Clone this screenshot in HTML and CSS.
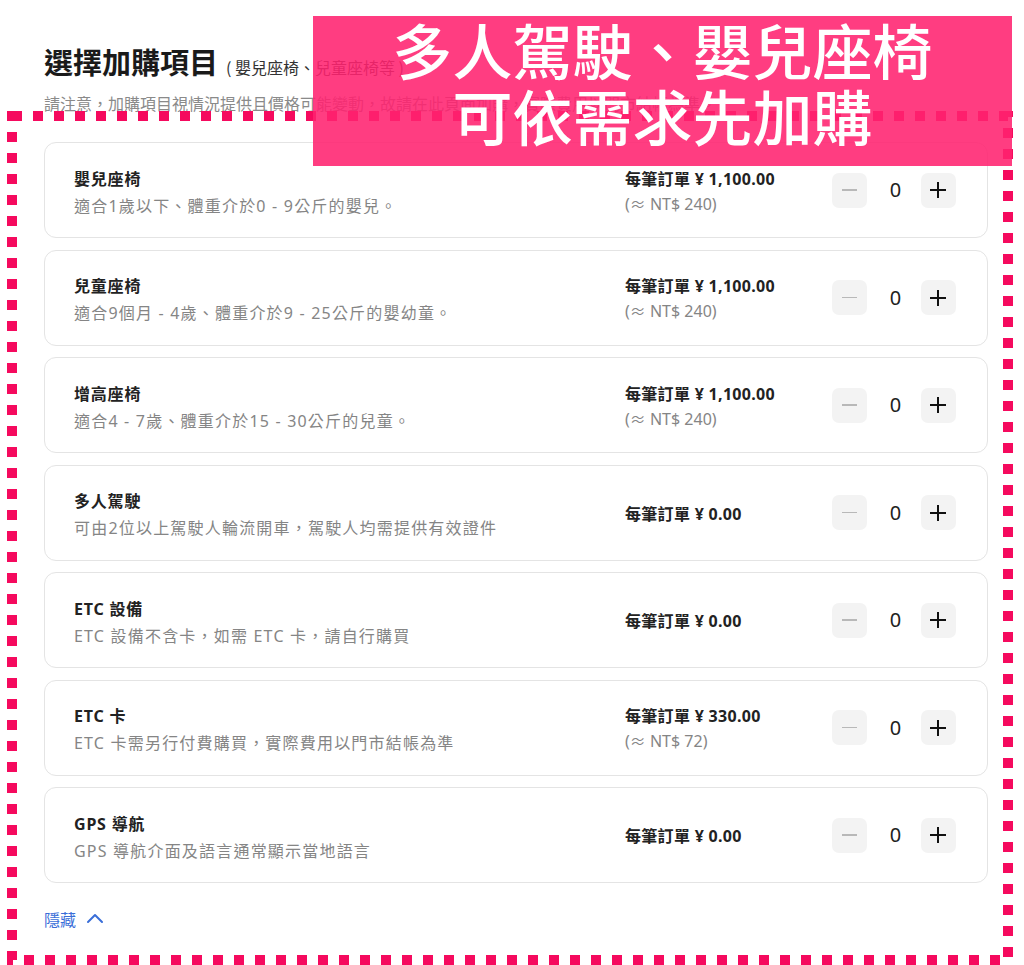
FILE: index.html
```html
<!DOCTYPE html>
<html lang="zh-Hant">
<head>
<meta charset="utf-8">
<title>選擇加購項目</title>
<link rel="stylesheet" href="styles.css">
</head>
<body>
<main class="page">
  <h1 class="title">選擇加購項目<span class="title-sub">( 嬰兒座椅、兒童座椅等 )</span></h1>
  <p class="note">請注意，加購項目視情況提供且價格可能變動，故請在此頁面加購，實際費用以門市結帳為準。</p>

  <ul class="list">
    <li class="card">
      <div class="info"><div class="name">嬰兒座椅</div><div class="desc">適合1歲以下、體重介於0 - 9公斤的嬰兒。</div></div>
      <div class="price"><div class="amount">每筆訂單 ¥ 1,100.00</div><div class="approx">(≈ NT$ 240)</div></div>
      <div class="stepper"><button class="btn minus" aria-label="減少"><span></span></button><span class="qty">0</span><button class="btn plus" aria-label="增加"><span></span></button></div>
    </li>
    <li class="card">
      <div class="info"><div class="name">兒童座椅</div><div class="desc">適合9個月 - 4歲、體重介於9 - 25公斤的嬰幼童。</div></div>
      <div class="price"><div class="amount">每筆訂單 ¥ 1,100.00</div><div class="approx">(≈ NT$ 240)</div></div>
      <div class="stepper"><button class="btn minus" aria-label="減少"><span></span></button><span class="qty">0</span><button class="btn plus" aria-label="增加"><span></span></button></div>
    </li>
    <li class="card">
      <div class="info"><div class="name">增高座椅</div><div class="desc">適合4 - 7歲、體重介於15 - 30公斤的兒童。</div></div>
      <div class="price"><div class="amount">每筆訂單 ¥ 1,100.00</div><div class="approx">(≈ NT$ 240)</div></div>
      <div class="stepper"><button class="btn minus" aria-label="減少"><span></span></button><span class="qty">0</span><button class="btn plus" aria-label="增加"><span></span></button></div>
    </li>
    <li class="card">
      <div class="info"><div class="name">多人駕駛</div><div class="desc">可由2位以上駕駛人輪流開車，駕駛人均需提供有效證件</div></div>
      <div class="price"><div class="amount">每筆訂單 ¥ 0.00</div></div>
      <div class="stepper"><button class="btn minus" aria-label="減少"><span></span></button><span class="qty">0</span><button class="btn plus" aria-label="增加"><span></span></button></div>
    </li>
    <li class="card">
      <div class="info"><div class="name">ETC 設備</div><div class="desc">ETC 設備不含卡，如需 ETC 卡，請自行購買</div></div>
      <div class="price"><div class="amount">每筆訂單 ¥ 0.00</div></div>
      <div class="stepper"><button class="btn minus" aria-label="減少"><span></span></button><span class="qty">0</span><button class="btn plus" aria-label="增加"><span></span></button></div>
    </li>
    <li class="card">
      <div class="info"><div class="name">ETC 卡</div><div class="desc">ETC 卡需另行付費購買，實際費用以門市結帳為準</div></div>
      <div class="price"><div class="amount">每筆訂單 ¥ 330.00</div><div class="approx">(≈ NT$ 72)</div></div>
      <div class="stepper"><button class="btn minus" aria-label="減少"><span></span></button><span class="qty">0</span><button class="btn plus" aria-label="增加"><span></span></button></div>
    </li>
    <li class="card">
      <div class="info"><div class="name">GPS 導航</div><div class="desc">GPS 導航介面及語言通常顯示當地語言</div></div>
      <div class="price"><div class="amount">每筆訂單 ¥ 0.00</div></div>
      <div class="stepper"><button class="btn minus" aria-label="減少"><span></span></button><span class="qty">0</span><button class="btn plus" aria-label="增加"><span></span></button></div>
    </li>
  </ul>

  <a class="toggle" href="#">隱藏
    <svg class="chev" width="18" height="12" viewBox="0 0 18 12"><path d="M2 10 L9 3 L16 10" fill="none" stroke="currentColor" stroke-width="2" stroke-linecap="round" stroke-linejoin="round"/></svg>
  </a>
</main>

<svg class="dots" width="1024" height="965" viewBox="0 0 1024 965" aria-hidden="true">
  <rect x="12" y="116" width="996" height="844" fill="none" stroke="#f50a5e" stroke-width="10" stroke-dasharray="10 11"/>
</svg>

<div class="banner">
  <div>多人駕駛、嬰兒座椅</div>
  <div>可依需求先加購</div>
</div>
</body>
</html>
```

FILE: styles.css
```css
* { box-sizing: border-box; }

html, body {
  margin: 0;
  padding: 0;
  background: #ffffff;
}

body {
  position: relative;
  width: 1024px;
  height: 965px;
  overflow: hidden;
  font-family: "Noto Sans", "Noto Sans CJK TC", sans-serif;
  color: #222222;
}

.page {
  padding: 41px 36px 0 44px;
}

.title {
  margin: 0;
  font-family: "Noto Sans CJK TC", sans-serif;
  font-size: 29px;
  font-weight: 700;
  line-height: 40px;
  color: #1a1a1a;
}

.title-sub {
  margin-left: 8px;
  font-size: 16px;
  font-weight: 400;
  color: #333333;
}

.note {
  margin: 5px 0 0;
  font-size: 16px;
  line-height: 24px;
  color: #8a8a8a;
  white-space: nowrap;
}

.list {
  list-style: none;
  margin: 26px 0 0;
  padding: 0;
  display: flex;
  flex-direction: column;
  gap: 11.5px;
}

.card {
  height: 96px;
  border: 1px solid #e4e4e4;
  border-radius: 12px;
  padding: 0 31px 0 29px;
  display: grid;
  grid-template-columns: 1fr 207px 124px;
  align-items: center;
}

.info, .price {
  display: flex;
  flex-direction: column;
  justify-content: center;
}

.info { padding-top: 5px; }
.price { padding-top: 3px; }

.name {
  font-size: 16px;
  font-weight: 700;
  line-height: 27px;
  letter-spacing: 0.8px;
  color: #222222;
}

.desc {
  font-size: 16px;
  line-height: 27px;
  letter-spacing: 1.2px;
  color: #858585;
}

.amount {
  font-size: 16px;
  font-weight: 700;
  line-height: 25px;
  letter-spacing: 0.3px;
  color: #222222;
}

.approx {
  font-size: 16px;
  line-height: 25px;
  color: #858585;
}

.stepper {
  display: flex;
  align-items: center;
  justify-content: space-between;
}

.btn {
  width: 35px;
  height: 35px;
  border: none;
  border-radius: 7px;
  background: #f3f3f3;
  padding: 0;
  display: flex;
  align-items: center;
  justify-content: center;
  position: relative;
}

.btn span {
  display: block;
  width: 16px;
  height: 2px;
  background: #111111;
  position: relative;
}

.minus span {
  width: 15px;
  height: 1.5px;
  background: #b8b8b8;
}

.plus span::after {
  content: "";
  position: absolute;
  left: 7px;
  top: -7px;
  width: 2px;
  height: 16px;
  background: #111111;
}

.qty {
  font-size: 20px;
  line-height: 26px;
  color: #222222;
  margin-left: 3px;
}

.toggle {
  display: inline-flex;
  align-items: center;
  gap: 10px;
  margin-top: 24px;
  font-family: "Noto Sans CJK TC", sans-serif;
  font-size: 16px;
  line-height: 24px;
  color: #3a6ed8;
  text-decoration: none;
}

.chev { display: block; margin-top: -2px; }

.dots {
  position: absolute;
  left: 0;
  top: 0;
  pointer-events: none;
}

.banner {
  position: absolute;
  left: 313px;
  top: 16px;
  width: 699px;
  height: 150px;
  background: rgba(255, 34, 112, 0.88);
  color: #ffffff;
  font-family: "Noto Sans CJK TC", sans-serif;
  font-size: 60px;
  font-weight: 500;
  line-height: 66px;
  text-align: center;
  padding-top: 0;
}
```
